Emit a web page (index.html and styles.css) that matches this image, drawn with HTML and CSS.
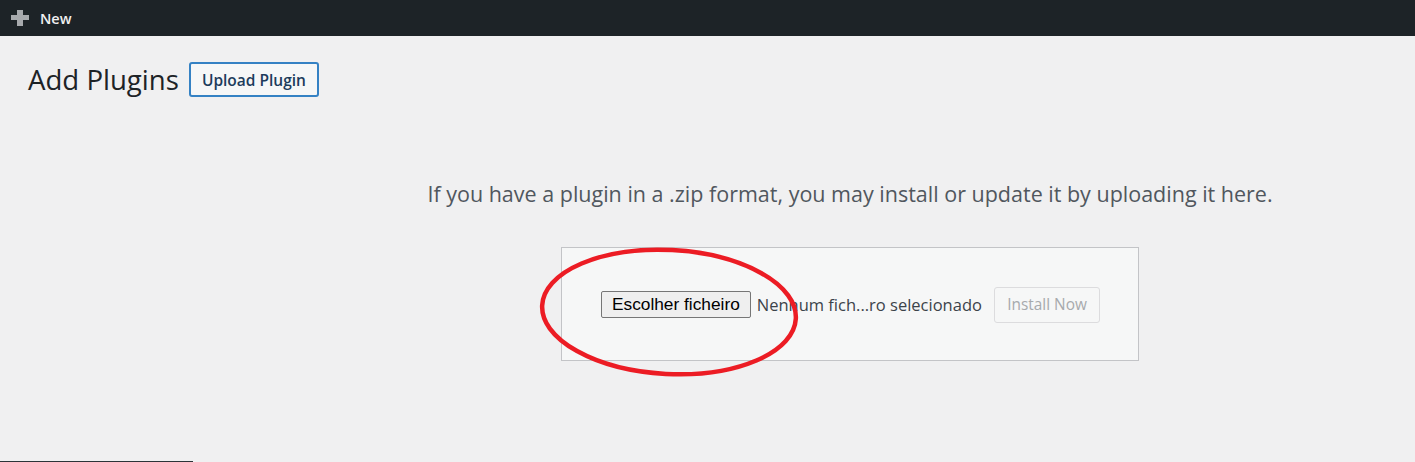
FILE: index.html
```html
<!DOCTYPE html>
<html lang="en">
<head>
<meta charset="utf-8">
<title>Add Plugins</title>
<link rel="stylesheet" href="styles.css">
</head>
<body>
<div class="page">
  <header class="adminbar">
    <span class="plus" aria-hidden="true"></span>
    <span class="new">New</span>
  </header>
  <main class="content">
    <div class="title-row">
      <h1 class="title">Add Plugins</h1>
      <button class="title-action" type="button">Upload Plugin</button>
    </div>
    <section class="upload">
      <p class="help">If you have a plugin in a .zip format, you may install or update it by uploading it here.</p>
      <div class="form-wrap">
        <form class="upload-form">
          <div class="file-input">
            <span class="file-btn">Escolher ficheiro</span>
            <span class="file-name">Nenhum fich...ro selecionado</span>
          </div>
          <button class="install" type="button" disabled>Install Now</button>
        </form>
        <svg class="circle" width="270" height="140" viewBox="0 0 270 140" aria-hidden="true">
          <ellipse cx="130" cy="65" rx="127" ry="62" transform="rotate(3 130 65)" fill="none" stroke="#ec1c24" stroke-width="4.5"/>
        </svg>
      </div>
    </section>
  </main>
  <div class="bottom-strip"><span class="dark"></span></div>
</div>
</body>
</html>
```
FILE: styles.css
```css
* { box-sizing: border-box; }
html, body { margin: 0; padding: 0; }
body {
  background: #f0f0f1;
  font-family: "Open Sans", "Noto Sans", sans-serif;
  color: #1d2327;
  overflow: hidden;
}
.page {
  height: 462px;
  display: flex;
  flex-direction: column;
}
.adminbar {
  height: 36px;
  flex: none;
  background: #1d2327;
  display: flex;
  align-items: center;
  padding-left: 11px;
  gap: 11px;
}
.plus {
  position: relative;
  width: 18px;
  height: 16px;
  margin-top: -1px;
}
.plus::before, .plus::after {
  content: "";
  position: absolute;
  background: #a7aaad;
}
.plus::before { left: 0; right: 0; top: 5px; height: 5px; }
.plus::after { top: 0; bottom: 0; left: 6px; width: 6px; }
.new {
  color: #f0f0f1;
  font-size: 14.5px;
  font-weight: 600;
}
.content {
  flex: 1;
  padding: 26px 0 0 28px;
}
.title-row {
  display: flex;
  align-items: center;
  gap: 10px;
}
.title {
  margin: 0;
  font-size: 27.6px;
  font-weight: 400;
  line-height: 35px;
  color: #1d2327;
}
.title-action {
  height: 35px;
  padding: 0 11px;
  border: 2px solid #3582c4;
  border-radius: 3px;
  background: #f6f7f7;
  color: #1d3c5c;
  font-family: inherit;
  font-size: 15.5px;
  font-weight: 600;
}
.upload {
  margin-left: 257px;
  text-align: center;
  padding-top: 82px;
}
.help {
  margin: 0;
  font-size: 21.5px;
  line-height: 29px;
  color: #50575e;
}
.form-wrap {
  position: relative;
  width: 578px;
  margin: 39px auto 0;
}
.upload-form {
  margin: 0;
  width: 578px;
  height: 114px;
  border: 1px solid #c3c4c7;
  background: #f6f7f7;
  display: flex;
  align-items: center;
  padding: 1px 38px 0 39px;
}
.file-input {
  width: 393px;
  display: flex;
  align-items: center;
  gap: 6px;
}
.file-btn {
  height: 27px;
  padding: 0 10px;
  border: 1px solid #767676;
  border-radius: 2px;
  background: #efefef;
  color: #000;
  font-family: "Liberation Sans", Arial, sans-serif;
  font-size: 17.3px;
  line-height: 25px;
}
.file-name {
  font-size: 16.5px;
  color: #3c434a;
  white-space: nowrap;
}
.install {
  width: 106px;
  height: 36px;
  padding: 0;
  border: 1px solid #dcdcde;
  border-radius: 3px;
  background: #f6f7f7;
  color: #a7aaad;
  font-family: inherit;
  font-size: 15.4px;
}
.circle {
  position: absolute;
  left: -22px;
  top: 0;
}
.bottom-strip {
  height: 1px;
  flex: none;
  background: #f0f0f1;
}
.bottom-strip .dark {
  display: block;
  width: 193px;
  height: 1px;
  background: #2c3338;
}
```
